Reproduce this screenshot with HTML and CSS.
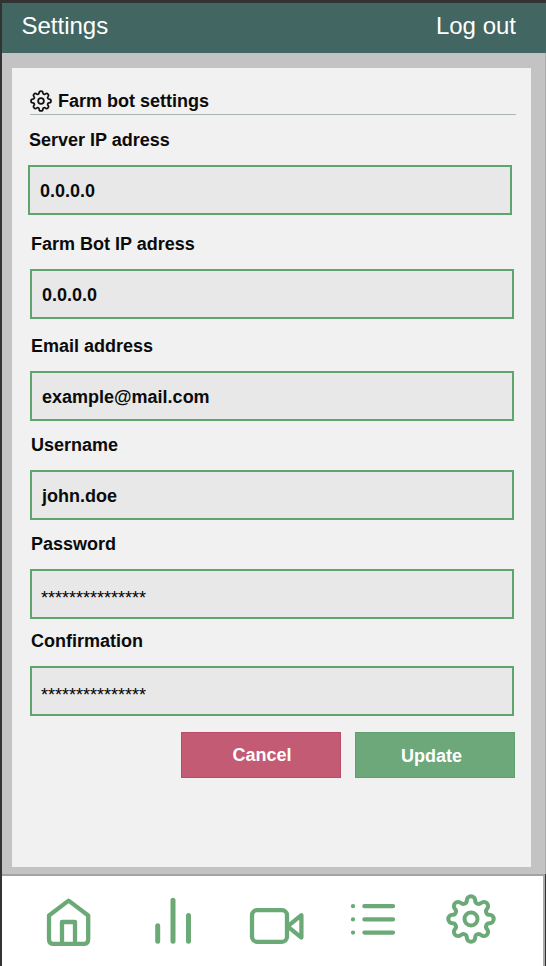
FILE: index.html
```html
<!DOCTYPE html>
<html lang="en">
<head>
<meta charset="utf-8">
<title>Settings</title>
<link rel="stylesheet" href="styles.css">
</head>
<body>
<svg class="symbols" aria-hidden="true">
  <symbol id="gear" viewBox="0 0 50 50">
    <path d="M20.8 6.5A4.2 4.2 0 0 1 29.2 6.5A3.45 3.45 0 0 0 35.12 8.95A4.2 4.2 0 0 1 41.05 14.88A3.45 3.45 0 0 0 43.5 20.8A4.2 4.2 0 0 1 43.5 29.2A3.45 3.45 0 0 0 41.05 35.12A4.2 4.2 0 0 1 35.12 41.05A3.45 3.45 0 0 0 29.2 43.5A4.2 4.2 0 0 1 20.8 43.5A3.45 3.45 0 0 0 14.88 41.05A4.2 4.2 0 0 1 8.95 35.12A3.45 3.45 0 0 0 6.5 29.2A4.2 4.2 0 0 1 6.5 20.8A3.45 3.45 0 0 0 8.95 14.88A4.2 4.2 0 0 1 14.88 8.95A3.45 3.45 0 0 0 20.8 6.5Z"/>
    <circle cx="25" cy="25" r="6.5"/>
  </symbol>
</svg>
<div class="screen">
  <header class="topbar">
    <h1 class="topbar-title">Settings</h1>
    <a class="topbar-title">Log out</a>
  </header>
  <main class="content">
    <form class="card">
      <h2 class="section-title"><svg class="title-icon"><use href="#gear"/></svg>Farm bot settings</h2>
      <div class="field field-server"><label>Server IP adress</label><div class="input">0.0.0.0</div></div>
      <div class="field field-bot"><label>Farm Bot IP adress</label><div class="input">0.0.0.0</div></div>
      <div class="field field-email"><label>Email address</label><div class="input">example@mail.com</div></div>
      <div class="field field-user"><label>Username</label><div class="input">john.doe</div></div>
      <div class="field field-pass"><label>Password</label><div class="input secret">***************</div></div>
      <div class="field field-confirm"><label>Confirmation</label><div class="input secret">***************</div></div>
      <div class="actions">
        <button type="button" class="btn cancel">Cancel</button>
        <button type="button" class="btn update">Update</button>
      </div>
    </form>
  </main>
  <nav class="tabs">
    <svg class="tab home" viewBox="0 0 46 50"><path d="M3 19.5V43Q3 48 8 48H37.2Q42.2 48 42.2 43V19.5L22.6 4.6ZM16 47.5V26H29V47.5"/></svg>
    <svg class="tab chart" viewBox="0 0 40 50"><path d="M4.7 29.7V45.2M20 4.2V45.2M35.5 19.5V45.2"/></svg>
    <svg class="tab video" viewBox="0 0 56 40"><rect x="3" y="4.2" width="35" height="31.6" rx="5"/><path d="M52.4 9.2V31.6L38.6 20.4Z"/></svg>
    <svg class="tab list" viewBox="0 0 48 36"><path d="M15.4 5.2H44M15.4 18.4H44M15.4 31.6H44M4 5.2h.01M4 18.4h.01M4 31.6h.01"/></svg>
    <svg class="tab settings"><use href="#gear"/></svg>
  </nav>
</div>
</body>
</html>
```
FILE: styles.css
```css
* { box-sizing: border-box; }
body {
  margin: 0;
  background: #333;
  font-family: "Liberation Sans", Arial, sans-serif;
  color: #0b0b0b;
}
svg { fill: none; stroke-linecap: round; stroke-linejoin: round; }
.symbols { display: none; }
.screen {
  height: 966px;
  padding: 3px 0 0 2px;
  display: flex;
  flex-direction: column;
  overflow: hidden;
}
.topbar {
  height: 50px;
  flex: none;
  padding: 0 30px 5px 19.5px;
  display: flex;
  align-items: center;
  justify-content: space-between;
  background: #426661;
}
.topbar-title {
  margin: 0;
  font-size: 24px;
  font-weight: 400;
  line-height: 28px;
  color: #fff;
}
.content {
  height: 821px;
  flex: none;
  padding: 15px 14px 7px 10px;
  background: #c3c3c3;
  border-right: 1px solid #aaa;
}
.card {
  height: 799px;
  padding: 22px 15px 0 17px;
  background: #f1f1f1;
}
.section-title {
  height: 25px;
  margin: 0 0 0 1px;
  display: flex;
  align-items: flex-start;
  gap: 6px;
  border-bottom: 1px solid #a9b6b3;
  font-size: 18px;
  line-height: 22px;
}
.title-icon { width: 22px; height: 22px; stroke: #111; stroke-width: 4; }
.field {
  width: 484px;
  margin-left: 1px;
  font-size: 18px;
  font-weight: 700;
  line-height: 22px;
}
.field label { display: block; padding-left: 1px; }
.input {
  height: 50px;
  margin-top: 14px;
  padding: 2px 0 0 10px;
  display: flex;
  align-items: center;
  background: #e8e8e8;
  border: 2px solid #5da56d;
}
.field-server { margin: 14px 0 0 -1px; }
.field-bot { margin-top: 18px; }
.field-email { margin-top: 16px; }
.field-user, .field-pass { margin-top: 13px; }
.field-confirm { margin-top: 11px; }
.secret { font-weight: 400; padding: 7px 0 0 9px; color: #000; }
.actions {
  margin: 16px 0 0 151.5px;
  display: flex;
  gap: 14px;
}
.btn {
  width: 160px;
  height: 46px;
  padding: 0 0 0 3px;
  font: 700 18px "Liberation Sans", Arial, sans-serif;
  color: #fff;
}
.cancel { background: #c35b75; border: 1px solid #b94c68; }
.update { background: #6ca879; padding: 2px 6px 0 0; border: 1px solid #60a06e; }
.tabs {
  flex: 1;
  margin-right: 1px;
  padding-left: 44px;
  display: flex;
  align-items: flex-start;
  background: #fff;
  border-top: 2px solid #a3a3a3;
  border-right: 2px solid #aaa;
}
.tab { flex: none; stroke: #6ba977; stroke-width: 4.3; }
.home { width: 46px; height: 50px; margin-top: 20px; }
.chart { width: 40px; height: 50px; margin: 20px 0 0 61px; stroke-width: 5; }
.video { width: 56px; height: 40px; margin: 30px 0 0 56px; }
.list { width: 48px; height: 36px; margin: 25px 0 0 44px; }
.settings { width: 50px; height: 50px; margin: 18px 0 0 49px; stroke-width: 4; }
```
